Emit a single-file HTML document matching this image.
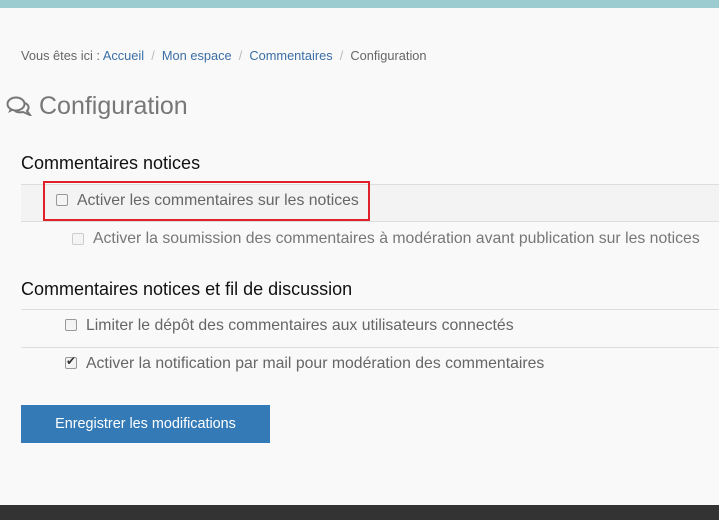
<!DOCTYPE html>
<html><head><meta charset="utf-8"><style>
*{margin:0;padding:0;box-sizing:border-box}
body{width:719px;height:520px;overflow:hidden;background:#f9f9f9;font-family:"Liberation Sans",sans-serif;position:relative}
.a{position:absolute;white-space:nowrap}
.cb{position:absolute;width:12px;height:12px;border:1px solid #999;border-radius:2px;background:#f4f4f4}
.t{font-size:15.8px;color:#666}
.h{font-size:18px;color:#111}
.line{position:absolute;left:21px;right:0;height:1px;background:#ddd}
</style></head><body>
<div class="a" style="left:0;top:0;width:719px;height:8px;background:#9ccbd0"></div>
<div class="a" style="left:21px;top:48px;font-size:12.8px;color:#666">Vous êtes ici : <span style="color:#3a6ea5">Accueil</span> <span style="color:#bbb">&nbsp;/&nbsp;</span> <span style="color:#3a6ea5">Mon espace</span> <span style="color:#bbb">&nbsp;/&nbsp;</span> <span style="color:#3a6ea5">Commentaires</span> <span style="color:#bbb">&nbsp;/&nbsp;</span> Configuration</div>
<svg class="a" style="left:6px;top:96px" width="26" height="20" viewBox="0 0 26 20"><ellipse cx="10" cy="8" rx="8.5" ry="6.5" fill="none" stroke="#777" stroke-width="2"/><path d="M4 13 L2 17 L8 14" fill="#777"/><path d="M19 7 Q25 10 21 15 L24 19 L17 16 Q12 17 9 15" fill="none" stroke="#777" stroke-width="2"/></svg>
<div class="a" style="left:39px;top:92px;font-size:25px;color:#777">Configuration</div>
<div class="a h" style="left:21px;top:153px">Commentaires notices</div>
<div class="a" style="left:21px;top:184px;right:0;height:38px;background:#f3f3f3;border-top:1px solid #ddd;border-bottom:1px solid #ddd"></div>
<div class="a" style="left:43px;top:181px;width:327px;height:40px;border:2px solid #e0202a"></div>
<div class="cb" style="left:56px;top:194px"></div>
<div class="a t" style="left:77px;top:192px">Activer les commentaires sur les notices</div>
<div class="cb" style="left:72px;top:233px;border-color:#ccc"></div>
<div class="a t" style="left:93px;top:230px;color:#777">Activer la soumission des commentaires à modération avant publication sur les notices</div>
<div class="a h" style="left:21px;top:279px">Commentaires notices et fil de discussion</div>
<div class="line" style="top:309px"></div>
<div class="cb" style="left:65px;top:319px"></div>
<div class="a t" style="left:86px;top:317px">Limiter le dépôt des commentaires aux utilisateurs connectés</div>
<div class="line" style="top:347px"></div>
<div class="cb" style="left:65px;top:357px"></div>
<div class="a" style="left:66px;top:354px;font-size:12px;color:#333">✔</div>
<div class="a t" style="left:86px;top:355px">Activer la notification par mail pour modération des commentaires</div>
<div class="a" style="left:21px;top:405px;width:249px;height:38px;background:#337ab7;color:#fff;font-size:14.4px;text-align:center;line-height:38px">Enregistrer les modifications</div>
<div class="a" style="left:0;top:505px;width:719px;height:15px;background:#333"></div>
</body></html>
